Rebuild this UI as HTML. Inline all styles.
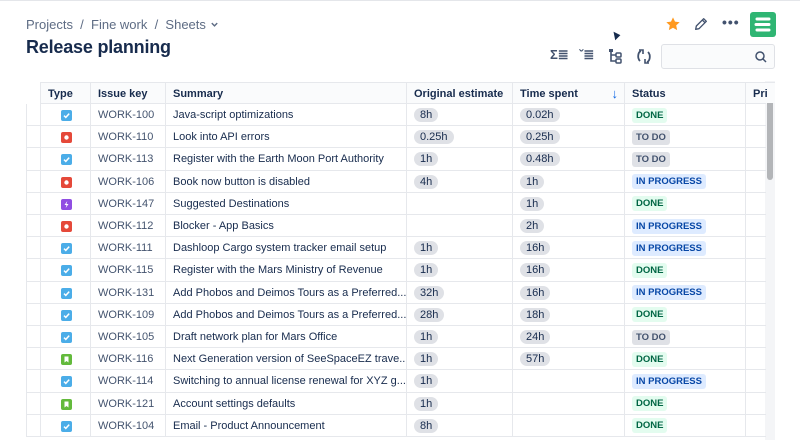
<!DOCTYPE html>
<html><head><meta charset="utf-8"><style>
*{box-sizing:border-box;margin:0;padding:0}
body{width:800px;height:440px;overflow:hidden;background:#fff;font-family:"Liberation Sans",sans-serif;color:#172b4d;position:relative}
.topline{position:absolute;left:0;top:0;width:800px;height:1px;background:#e4e6ea}
.bc{position:absolute;left:26px;top:17px;font-size:13px;color:#5e6c84}
.title{position:absolute;left:26px;top:37px;font-size:18px;font-weight:bold;letter-spacing:-0.2px;color:#172b4d}
.r{position:absolute;left:26px;width:740px;height:23px;border-bottom:1px solid #e6e8ec}
.c{position:absolute;top:0;height:100%;border-left:1px solid #e6e8ec;font-size:11px;line-height:22px;padding-left:7px;white-space:nowrap;overflow:hidden}
.hd .c{font-weight:bold;font-size:11px;background:#fafbfc;color:#172b4d;border-top:1px solid #e6e8ec}
.key{color:#44546f}
.pill{display:inline-block;background:#dfe1e6;border-radius:8px;padding:0 6px;line-height:14px;font-size:11px;color:#172b4d;vertical-align:middle}
.st{display:inline-block;font-size:9.5px;font-weight:bold;padding:0 4px;line-height:15px;border-radius:3px;vertical-align:middle}
.done{background:#e3fcef;color:#006644}.todo{background:#dfe1e6;color:#42526e}.ip{background:#deebff;color:#0747a6}
.ic{position:absolute;left:20px;top:6px;width:11px;height:11px;border-radius:2px}
.ic svg{display:block}
.task{background:#4bade8}.bug{background:#e5493a}.epic{background:#904ee2}.story{background:#63ba3c}
</style></head><body>
<div class="topline"></div>
<div class="bc">Projects &nbsp;/&nbsp; Fine work &nbsp;/&nbsp; Sheets <svg width="9" height="9" viewBox="0 0 10 10"><path d="M2 3.5l3 3 3-3" stroke="#5e6c84" stroke-width="1.6" fill="none"/></svg></div>
<div class="title">Release planning</div>
<svg style="position:absolute;left:665px;top:16px" width="16" height="16" viewBox="0 0 24 24"><path d="M12 2l3 6.5 7 .8-5.2 4.8 1.4 7L12 17.6 5.8 21.1l1.4-7L2 9.3l7-.8z" fill="#ff991f"/></svg>
<svg style="position:absolute;left:693px;top:16px" width="16" height="16" viewBox="0 0 24 24"><path d="M4 20l1-5L16 4l4 4L9 19z M14 6l4 4" stroke="#42526e" stroke-width="2" fill="none" stroke-linejoin="round"/></svg>
<div style="position:absolute;left:722px;top:14px;font-size:14px;font-weight:bold;color:#42526e;letter-spacing:1px">•••</div>
<div style="position:absolute;left:750px;top:12px;width:26px;height:25px;background:#2fb573;border-radius:3px"><svg width="26" height="25" viewBox="0 0 26 25"><path d="M7 7h12M6 12.5h13M7 18h12" stroke="#fff" stroke-width="3" stroke-linecap="round"/></svg></div>
<svg style="position:absolute;left:612px;top:30px" width="10" height="14" viewBox="0 0 10 14"><path d="M1 1l2 10 6-6z" fill="#172b4d" stroke="#fff" stroke-width=".7"/></svg>
<div style="position:absolute;left:550px;top:47px;font-size:13px;color:#42526e;font-weight:bold">Σ≣</div>
<div style="position:absolute;left:579px;top:47px;font-size:13px;color:#42526e;font-weight:bold">ˇ≣</div>
<svg style="position:absolute;left:608px;top:48px" width="14" height="16" viewBox="0 0 14 16"><path d="M3 1v12h5M3 7h5" stroke="#42526e" stroke-width="1.6" fill="none"/><rect x="1" y="1" width="4" height="3" fill="#42526e"/><rect x="8" y="5" width="5" height="4" rx="1" stroke="#42526e" fill="none" stroke-width="1.5"/><rect x="8" y="11" width="5" height="4" rx="1" stroke="#42526e" fill="none" stroke-width="1.5"/></svg>
<svg style="position:absolute;left:636px;top:49px" width="16" height="15" viewBox="0 0 16 15"><path d="M5 2C2 3 1 9 4 12M11 13c3-1 4-7 1-10" stroke="#42526e" stroke-width="1.8" fill="none"/><path d="M3 1h4v4M13 14H9v-4" stroke="#42526e" stroke-width="1.6" fill="none"/></svg>
<div style="position:absolute;left:661px;top:44px;width:114px;height:25px;border:1px solid #dfe1e6;border-radius:3px;background:#fafbfc"><svg style="position:absolute;right:7px;top:6px" width="12" height="12" viewBox="0 0 12 12"><circle cx="5" cy="5" r="4" stroke="#42526e" stroke-width="1.5" fill="none"/><path d="M8 8l3 3" stroke="#42526e" stroke-width="1.5"/></svg></div>
<div style="position:absolute;left:765px;top:81px;width:10px;height:359px;background:#f4f5f7"></div>
<div style="position:absolute;left:767px;top:84px;width:6px;height:96px;background:#b3b5b8;border-radius:3px"></div>
<div id="t"></div>
<script>
var rows=[["task","100","Java-script optimizations","8h","0.02h","done"],["bug","110","Look into API errors","0.25h","0.25h","todo"],["task","113","Register with the Earth Moon Port Authority","1h","0.48h","todo"],["bug","106","Book now button is disabled","4h","1h","ip"],["epic","147","Suggested Destinations","","1h","done"],["bug","112","Blocker - App Basics","","2h","ip"],["task","111","Dashloop Cargo system tracker email setup","1h","16h","ip"],["task","115","Register with the Mars Ministry of Revenue","1h","16h","done"],["task","131","Add Phobos and Deimos Tours as a Preferred...","32h","16h","ip"],["task","109","Add Phobos and Deimos Tours as a Preferred...","28h","18h","done"],["task","105","Draft network plan for Mars Office","1h","24h","todo"],["story","116","Next Generation version of SeeSpaceEZ trave...","1h","57h","done"],["task","114","Switching to annual license renewal for XYZ g...","1h","","ip"],["story","121","Account settings defaults","1h","","done"],["task","104","Email - Product Announcement","8h","","done"]];
var S={done:"DONE",todo:"TO DO",ip:"IN PROGRESS"};
var G={task:'<svg width="11" height="11" viewBox="0 0 11 11"><path d="M3 5.6l1.8 1.8L8.2 3.6" stroke="#fff" stroke-width="1.5" fill="none"/></svg>',bug:'<svg width="11" height="11" viewBox="0 0 11 11"><circle cx="5.5" cy="5.5" r="2.2" fill="#fff"/></svg>',epic:'<svg width="11" height="11" viewBox="0 0 11 11"><path d="M6.3 2L3.5 6h2l-.8 3L7.5 5h-2z" fill="#fff"/></svg>',story:'<svg width="11" height="11" viewBox="0 0 11 11"><path d="M3.5 2.5h4v6L5.5 7l-2 1.5z" fill="#fff"/></svg>'};
var X=[14,64,139,380,486,598,719];var W=[50,75,241,106,112,121,30];
function cell(i,h,off){return '<div class="c" style="left:'+(X[i]-(off||0))+'px;width:'+W[i]+'px">'+h+'</div>';}
var h='<div class="r hd" style="top:82px;left:40px;width:726px;height:22px;border-bottom:1px solid #e6e8ec">'+cell(0,"Type",14)+cell(1,"Issue key",14)+cell(2,"Summary",14)+cell(3,"Original estimate",14)+cell(4,'Time spent<span style="position:absolute;right:6px;color:#0c66e4;font-size:13px">↓</span>',14)+cell(5,"Status",14)+cell(6,"Pri",14)+'</div>';
rows.forEach(function(r,i){var top=104+i*22.2;
h+='<div class="r" style="top:'+top+'px;height:22.2px"><div class="c" style="left:0;width:14px;border-left:1px solid #e6e8ec"></div>'+
'<div class="c" style="left:14px;width:50px"><div class="ic '+r[0]+'">'+G[r[0]]+'</div></div>'+
cell(1,'<span class="key">WORK-'+r[1]+'</span>')+cell(2,r[2])+cell(3,r[3]?'<span class="pill">'+r[3]+'</span>':'')+cell(4,r[4]?'<span class="pill">'+r[4]+'</span>':'')+cell(5,'<span class="st '+r[5]+'">'+S[r[5]]+'</span>')+cell(6,'')+'</div>';});
document.getElementById('t').innerHTML=h;
</script>
</body></html>
